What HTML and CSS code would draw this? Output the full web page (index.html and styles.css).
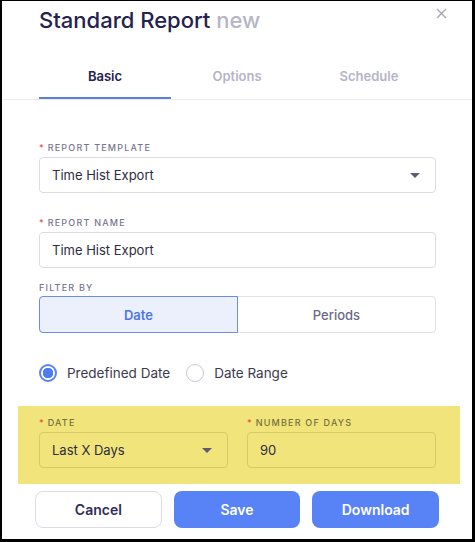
FILE: index.html
```html
<!DOCTYPE html>
<html lang="en">
  <head>
    <meta charset="UTF-8" />
    <meta name="viewport" content="width=device-width, initial-scale=1.0" />
    <title>Standard Report</title>
    <link rel="stylesheet" href="styles.css">
  </head>
  <body>
    <div class="modal">
      <div class="modal-head">
        <h1 class="title">Standard Report <span class="title-new">new</span></h1>
        <span class="close">
          <svg width="11" height="11" viewBox="0 0 11 11">
            <path d="M1 1 L10 10 M10 1 L1 10" stroke="#a8a7b8" stroke-width="1.4" fill="none" />
          </svg>
        </span>
      </div>

      <div class="tabs">
        <div class="tab active">Basic</div>
        <div class="tab">Options</div>
        <div class="tab">Schedule</div>
      </div>

      <div class="form">
        <div class="field">
          <div class="label"><span class="req">*</span>Report Template</div>
          <div class="select">
            <span>Time Hist Export</span>
            <span class="caret"></span>
          </div>
        </div>

        <div class="field field-name">
          <div class="label"><span class="req">*</span>Report Name</div>
          <div class="input">Time Hist Export</div>
        </div>

        <div class="field field-filter">
          <div class="label">Filter By</div>
          <div class="segments">
            <div class="segment active">Date</div>
            <div class="segment">Periods</div>
          </div>
        </div>

        <div class="radios">
          <label class="radio"><span class="dot checked"></span>Predefined Date</label>
          <label class="radio"><span class="dot"></span>Date Range</label>
        </div>
      </div>

      <!-- highlighted block -->
      <div class="highlight">
        <div class="field">
          <div class="label"><span class="req">*</span>Date</div>
          <div class="select">
            <span>Last X Days</span>
            <span class="caret"></span>
          </div>
        </div>
        <div class="field">
          <div class="label"><span class="req">*</span>Number of Days</div>
          <div class="input">90</div>
        </div>
      </div>

      <div class="actions">
        <button class="btn btn-cancel">Cancel</button>
        <button class="btn btn-primary">Save</button>
        <button class="btn btn-primary">Download</button>
      </div>
    </div>
  </body>
</html>
```

FILE: styles.css
```css
body {
  margin: 0;
  font-family: Inter, "Noto Sans", sans-serif;
  color: #2e2d3d;
}
.modal {
  box-sizing: border-box;
  width: 475px;
  height: 542px;
  border-style: solid;
  border-color: #000;
  border-width: 1px 3px 3px 2px;
  background-color: white;
}

/* Header */
.modal-head {
  display: flex;
  justify-content: space-between;
  padding: 5px 25px 0 37px;
}
.title {
  margin: 0;
  font-size: 22px;
  line-height: 28px;
  font-weight: 500;
  color: #24224f;
}
.title-new {
  color: #b6b5c6;
}
.close {
  padding-top: 2px;
}
.close svg {
  display: block;
}

/* Tabs */
.tabs {
  display: flex;
  margin-top: 21px;
  padding-left: 37px;
  border-bottom: 1px solid #ececf1;
}
.tab {
  width: 132px;
  padding: 13px 0 13px;
  line-height: 16px;
  text-align: center;
  font-size: 13px;
  font-weight: 600;
  color: #b5b4c7;
  border-bottom: 2px solid transparent;
}
.tab.active {
  color: #24224f;
  border-bottom-color: #5a7fe6;
}

/* Form */
.form {
  padding: 42px 36px 0 37px;
}
.label {
  font-size: 9px;
  line-height: 12px;
  font-weight: 500;
  letter-spacing: 1.2px;
  text-transform: uppercase;
  color: #78768f;
  margin-bottom: 3px;
}
.req {
  color: #e5503a;
  margin-right: 4px;
  letter-spacing: 0;
}
.select,
.input {
  box-sizing: border-box;
  height: 36px;
  display: flex;
  align-items: center;
  justify-content: space-between;
  padding: 0 15px 0 12px;
  border: 1px solid #dcdbe4;
  border-radius: 4px;
  font-size: 13px;
  color: #2e2d3d;
}
.caret {
  width: 0;
  height: 0;
  border-left: 5px solid transparent;
  border-right: 5px solid transparent;
  border-top: 5px solid #5d5b70;
}
.field-name {
  margin-top: 24px;
}
.field-filter {
  margin-top: 14px;
}
.field-filter .label {
  margin-bottom: 2px;
}
.segments {
  display: flex;
  height: 37px;
  border: 1px solid #e1e0e8;
  border-radius: 4px;
  box-sizing: border-box;
}
.segment {
  flex: 1;
  display: flex;
  align-items: center;
  justify-content: center;
  font-size: 13px;
  font-weight: 500;
  color: #6b6985;
}
.segment.active {
  margin: -1px 0 -1px -1px;
  background-color: #ebf0fc;
  border: 1px solid #6b8de6;
  border-radius: 4px 0 0 4px;
  color: #4f77e4;
  font-weight: 600;
}

/* Radios */
.radios {
  display: flex;
  gap: 16px;
  margin-top: 31px;
}
.radio {
  display: flex;
  align-items: center;
  gap: 10px;
  font-size: 13.5px;
  color: #3b3a4c;
}
.dot {
  box-sizing: border-box;
  width: 18px;
  height: 18px;
  border-radius: 50%;
  border: 1.5px solid #c9c8d3;
}
.dot.checked {
  border: 2px solid #5a82f0;
  background: radial-gradient(circle, #4f7cf0 0 5px, white 5.5px);
}

/* Highlight */
.highlight {
  display: flex;
  gap: 19px;
  margin: 24px 12px 0 16px;
  padding: 11px 24px 16px 21px;
  background-color: #f1e47b;
}
.highlight .field {
  flex: 1;
}
.highlight .label {
  color: #75703e;
}
.highlight .select,
.highlight .input {
  border-color: #d8ca68;
}

/* Actions */
.actions {
  display: flex;
  gap: 12px;
  padding: 7px 33px 0 33px;
}
.btn {
  width: 127px;
  height: 37px;
  border-radius: 8px;
  font-family: Inter, "Noto Sans", sans-serif;
  font-size: 14px;
  font-weight: 600;
  cursor: pointer;
}
.btn-cancel {
  background-color: white;
  border: 1px solid #dcdbe4;
  color: #2f2d5a;
}
.btn-primary {
  background-color: #5883f6;
  border: none;
  color: white;
}
```
